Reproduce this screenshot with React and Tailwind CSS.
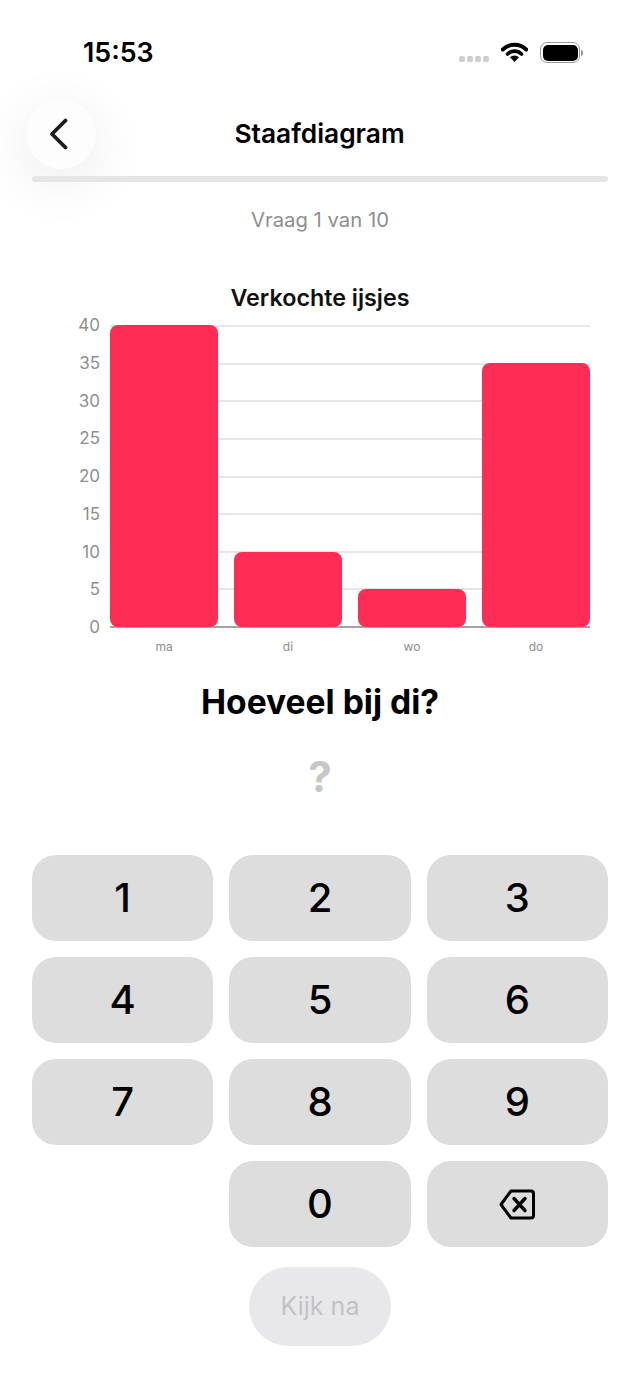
import React from "react";

const yLabels = [40, 35, 30, 25, 20, 15, 10, 5, 0];

const bars = [
  { label: "ma", value: 40 },
  { label: "di", value: 10 },
  { label: "wo", value: 5 },
  { label: "do", value: 35 },
];

const keys = ["1", "2", "3", "4", "5", "6", "7", "8", "9"];

function StatusBar() {
  return (
    <div className="flex h-[99px] items-start justify-between pl-[83px] pr-[57px] pt-[36px]">
      <span className="text-[26.800px] font-semibold leading-[32px] text-black">15:53</span>
      <div className="flex items-start pt-[6px]">
        <div className="mr-[12px] mt-[14px] flex gap-[2px]">
          <span className="h-[6px] w-[6px] rounded-[2px] bg-[#cfcfcf]" />
          <span className="h-[6px] w-[6px] rounded-[2px] bg-[#cfcfcf]" />
          <span className="h-[6px] w-[6px] rounded-[2px] bg-[#cfcfcf]" />
          <span className="h-[6px] w-[6px] rounded-[2px] bg-[#cfcfcf]" />
        </div>
        <svg width="27" height="20" viewBox="0 0 27 20" className="mr-[12px]">
          <path d="M1.8 7.500a17 17 0 0 1 23.400 0" fill="none" stroke="#000" strokeWidth="4" strokeLinecap="round" />
          <path d="M6.500 12a10 10 0 0 1 14 0" fill="none" stroke="#000" strokeWidth="3.600" strokeLinecap="round" />
          <path d="M9 15.200a7 7 0 0 1 9 0L13.500 20z" fill="#000" />
        </svg>
        <div className="flex items-center">
          <div className="h-[21px] w-[40px] rounded-[7px] border-[1.500px] border-[#9a9a9a] p-[1.500px]">
            <div className="h-full w-full rounded-[5px] bg-black" />
          </div>
          <span className="ml-[1px] h-[6px] w-[2px] rounded-r-[2px] bg-[#9a9a9a]" />
        </div>
      </div>
    </div>
  );
}

function Header() {
  return (
    <div className="grid grid-cols-[70px_1fr_70px] items-center pl-[26px] pr-[32px]">
      <button className="relative flex h-[70px] w-[70px] items-center justify-center rounded-full bg-[#fdfdfd] shadow-[0_12px_56px_rgba(0,0,0,0.09)]">
        <svg width="22" height="32" viewBox="0 0 22 32" className="-ml-[7px]">
          <path d="M18.500 2.500 5 16l13.500 13.500" fill="none" stroke="#1c1c1e" strokeWidth="3.800" strokeLinecap="round" strokeLinejoin="round" />
        </svg>
      </button>
      <h1 className="ml-[5px] text-center text-[26.300px] font-semibold leading-[32px] text-black">Staafdiagram</h1>
      <div />
    </div>
  );
}

function Chart() {
  return (
    <div className="mt-[50px] flex flex-col">
      <h2 className="text-center text-[23.300px] font-semibold leading-[28px] text-[#111]">Verkochte ijsjes</h2>
      <div className="mt-[13px] flex pl-[70px] pr-[50px]">
        <div className="-my-[10px] flex h-[322px] w-[30px] flex-col justify-between text-right text-[17px] leading-[20px] text-[#8e8e8e]">
          {yLabels.map((y) => (
            <span key={y}>{y}</span>
          ))}
        </div>
        <div className="ml-[10px] flex-1">
          <div className="relative h-[303px]">
            <div className="absolute inset-0 flex flex-col justify-between">
              {yLabels.slice(0, -1).map((y) => (
                <div key={y} className="h-[2px] bg-[#e6e6e6]" />
              ))}
              <div className="h-[2px] bg-[#a3a3a3]" />
            </div>
            <div className="relative flex h-[302px] items-end gap-[16px]">
              {bars.map((b) => (
                <div
                  key={b.label}
                  className="flex-1 rounded-[8px] bg-[#ff2d55]"
                  style={{ height: `${(b.value / 40) * 302}px` }}
                />
              ))}
            </div>
          </div>
          <div className="mt-[11px] flex gap-[16px]">
            {bars.map((b) => (
              <span key={b.label} className="flex-1 text-center text-[12px] leading-[16px] text-[#8e8e8e]">
                {b.label}
              </span>
            ))}
          </div>
        </div>
      </div>
    </div>
  );
}

function Key({ children }) {
  return (
    <button className="flex h-[86px] items-center justify-center rounded-[24px] bg-[#dddddd] text-[40px] font-[450] text-black">
      {children}
    </button>
  );
}

function Keypad() {
  return (
    <div className="mt-[52px] grid grid-cols-3 gap-x-[16px] gap-y-[16px] px-[32px]">
      {keys.map((k) => (
        <Key key={k}>{k}</Key>
      ))}
      <div />
      <Key>0</Key>
      <Key>
        <svg width="36" height="31" viewBox="0 0 36 31" fill="none" stroke="#000" strokeLinecap="round" strokeLinejoin="round">
          <path d="M12 2h20a2.500 2.500 0 0 1 2.500 2.500v22a2.500 2.500 0 0 1-2.500 2.500H12L2 15.500z" strokeWidth="3" />
          <path d="M15 9.500l11 12M26 9.500l-11 12" strokeWidth="3.400" />
        </svg>
      </Key>
    </div>
  );
}

export default function App() {
  return (
    <div className="h-[1391px] w-[640px] overflow-hidden bg-white font-['Inter',sans-serif]">
      <StatusBar />
      <Header />
      <div className="relative mx-[32px] mt-[7px] h-[6px] rounded-full bg-[#e5e5e5]" />
      <p className="mt-[24px] text-center text-[20.300px] leading-[28px] text-[#8e8e8e]">Vraag 1 van 10</p>
      <Chart />
      <h3 className="mt-[27px] text-center text-[33.600px] font-bold leading-[40px] text-black">Hoeveel bij di?</h3>
      <div className="mt-[29px] text-center text-[42px] font-bold leading-[52px] text-[#c7c7c7]">?</div>
      <Keypad />
      <div className="mt-[20px] flex justify-center">
        <button className="h-[79px] w-[142px] rounded-full bg-[#e8e8ea] text-[25px] text-[#c2c2c6]">Kijk na</button>
      </div>
    </div>
  );
}
